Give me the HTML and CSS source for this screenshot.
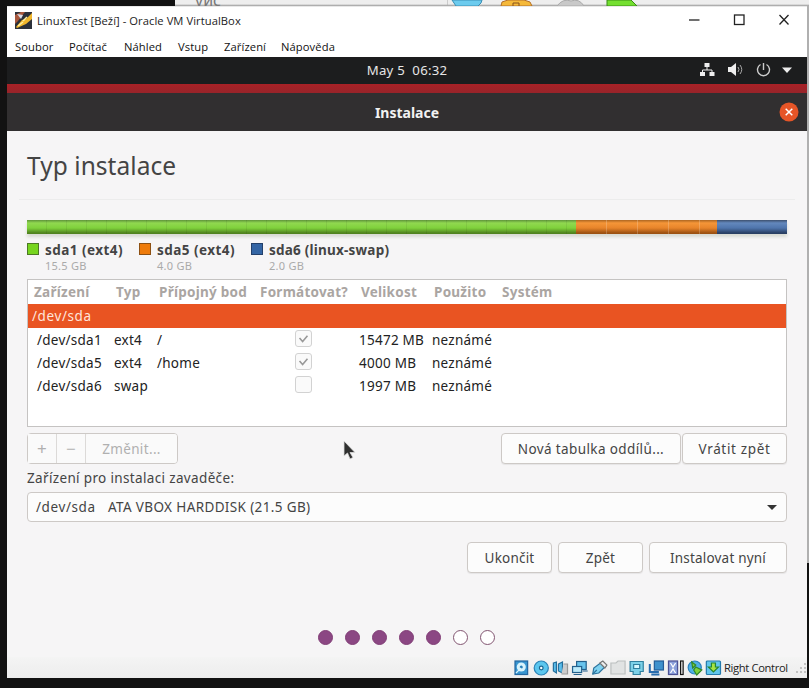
FILE: index.html
```html
<!DOCTYPE html>
<html lang="cs">
<head>
<meta charset="utf-8">
<title>LinuxTest [Beží] - Oracle VM VirtualBox</title>
<link rel="stylesheet" href="styles.css">
</head>
<body>
<div class="desktop">
  <div class="strip">
    <span class="strip-text">vис</span>
    <svg class="strip-icons" width="200" height="6" viewBox="0 0 200 6">
      <path d="M0 0v6" stroke="#aaa"/>
      <path d="M5 0h30l-1 3-3 3H9L7 3z" fill="#6ccbee" stroke="#3a8fb5"/>
      <path d="M54 6l1-4 6-2h16l6 2 2 4z" fill="#f5b93a" stroke="#b5702a"/>
      <path d="M66 6V3h6v3" fill="none" stroke="#85501c"/>
      <path d="M110 6q6-8 14-5 8-3 13 5z" fill="#c9c9c9" stroke="#aaa"/>
      <path d="M160 6V0h24l6 6z" fill="#74df30" stroke="#3b8c18"/>
    </svg>
  </div>
  <main class="window">
    <header class="titlebar">
      <svg class="app-icon" width="17" height="17" viewBox="0 0 17 17">
        <rect width="17" height="17" fill="#2b303a"/>
        <path d="M0 3l6-3h4L3 9 0 12z" fill="#a8573c"/>
        <path d="M2 2l6 1-2 4z" fill="#d7dce8"/>
        <path d="M1 15L7 8l4-1 6-6v6l-6 5-9 4z" fill="#f0b62c"/>
        <path d="M8 9l4-4M3 14l5-4" stroke="#fff0a0" stroke-width="1.5"/>
      </svg>
      <span class="win-title">LinuxTest [Beží] - Oracle VM VirtualBox</span>
      <svg class="win-controls" width="100" height="14" viewBox="0 0 100 14" fill="none" stroke="#222" stroke-width="1.3">
        <path d="M1 7h10.500"/><rect x="46.500" y="2" width="9.500" height="9.500"/><path d="M92 2l9 9.500M101 2l-9 9.500" transform="translate(-.5)"/>
      </svg>
    </header>
    <nav class="menubar">
      <span class="m1">Soubor</span><span class="m2">Počítač</span><span class="m3">Náhled</span><span class="m4">Vstup</span><span class="m5">Zařízení</span><span class="m6">Nápověda</span>
    </nav>
    <div class="panel">
      <span class="clock">May 5&nbsp; 06:32</span>
      <svg class="tray" width="94" height="16" viewBox="0 0 94 16" fill="none" stroke="#eee">
        <path d="M5.500 1h5v4h-5zM1 10h5v4H1zM10.500 10h5v4h-5z" fill="#eee" stroke="none"/>
        <path d="M8 5v3M3.500 10V8h9.500v2"/>
        <path d="M29 5h3l5-4v13l-5-4h-3z" fill="#eee" stroke="none"/>
        <path d="M39 5q2 2.500 0 5M41 3q3.500 4.500 0 9" stroke="#aaa"/>
        <path d="M61.500 2.500a6 6 0 1 0 6 0M64.500 1v7" stroke="#ccc" stroke-width="1.400"/>
        <path d="M83 5.500h10L88 11z" fill="#eee" stroke="none"/>
      </svg>
    </div>
    <div class="wallpaper"></div>
    <div class="dialog-head">
      <span class="dialog-title">Instalace</span>
      <svg class="close" width="20" height="20" viewBox="0 0 20 20"><circle cx="10" cy="10" r="9.500" fill="#e65527"/><path d="M6.700 6.700l6.600 6.600M13.300 6.700l-6.600 6.600" stroke="#fff" stroke-width="1.500"/></svg>
    </div>
    <section class="content">
      <h1><span>Typ instalace</span></h1>
      <div class="disk-bar"><i class="green"></i><i class="orange"></i><i class="blue"></i></div>
      <div class="legend">
        <div class="part"><i class="swatch s-green"></i><div><b>sda1 (ext4)</b><small>15.5 GB</small></div></div>
        <div class="part"><i class="swatch s-orange"></i><div><b>sda5 (ext4)</b><small>4.0 GB</small></div></div>
        <div class="part"><i class="swatch s-blue"></i><div><b class="swap">sda6 (linux-swap)</b><small>2.0 GB</small></div></div>
      </div>
      <div class="table">
        <div class="row head"><span>Zařízení</span><span>Typ</span><span class="mount">Přípojný bod</span><span class="format">Formátovat?</span><span>Velikost</span><span>Použito</span><span>Systém</span></div>
        <div class="row selected"><span>/dev/sda</span></div>
        <div class="row"><span>/dev/sda1</span><span>ext4</span><span>/</span><span><svg class="check" viewBox="0 0 17 17"><path d="M4 8l3.500 4L13 5.500"/></svg></span><span class="size">15472 MB</span><span>neznámé</span></div>
        <div class="row"><span>/dev/sda5</span><span>ext4</span><span>/home</span><span><svg class="check" viewBox="0 0 17 17"><path d="M4 8l3.500 4L13 5.500"/></svg></span><span class="size">4000 MB</span><span>neznámé</span></div>
        <div class="row"><span>/dev/sda6</span><span>swap</span><span></span><span><svg class="check" viewBox="0 0 17 17"></svg></span><span class="size">1997 MB</span><span>neznámé</span></div>
      </div>
      <div class="tools">
        <div class="group"><button class="icon">+</button><button class="icon">−</button><button class="edit">Změnit...</button></div>
        <button class="new"><span>Nová tabulka oddílů...</span></button><button class="revert"><span>Vrátit zpět</span></button>
      </div>
      <label class="boot-label"><span>Zařízení pro instalaci zavaděče:</span></label>
      <div class="combo"><span class="dev">/dev/sda</span><span class="disk">ATA VBOX HARDDISK (21.5 GB)</span><i class="arrow"></i></div>
      <div class="actions"><button class="quit"><span>Ukončit</span></button><button class="back"><span>Zpět</span></button><button class="install"><span>Instalovat nyní</span></button></div>
      <div class="dots"><i></i><i></i><i></i><i></i><i></i><i class="open"></i><i class="open"></i></div>
    </section>
    <footer class="statusbar">
      <svg width="208" height="16" viewBox="0 0 206 16" preserveAspectRatio="none" fill="none" stroke-width="1.200">
        <rect x="1" y="1" width="12.500" height="13.500" fill="#3795d0" stroke="#2367a0"/><circle cx="7.200" cy="7" r="4.500" fill="#d8f3fc"/><circle cx="7.200" cy="7" r="1.500" fill="#277fb8"/><path d="M7 8l-5 5" stroke="#d8f3fc"/>
        <circle cx="27" cy="8" r="7" fill="#5bc6ee" stroke="#2b83b7"/><circle cx="27" cy="8" r="1.800" fill="#fff" stroke="#1c658f"/>
        <path d="M39 3l3-1v11l-3-2zM44 4l4-2v11l-4-2z" fill="#5abdeb" stroke="#246f9c"/><path d="M49 4h4v10h-6" fill="#ccc" stroke="#999"/>
        <rect x="62" y="1.500" width="9.500" height="8" fill="#69c4ed" stroke="#24618d"/><rect x="58" y="6.500" width="9" height="6" fill="#bceafa" stroke="#24618d"/><path d="M59 14.500h8M68 11h5" stroke="#24618d"/>
        <path d="M78 14l1-6 8-6 4 4-7 7z" fill="#80d2f0" stroke="#2c739d"/><path d="M85 3l3-2 4 4-2 3z" fill="#eee" stroke="#777"/><path d="M78 14l4-4" stroke="#2c739d"/>
        <path d="M96 3h5l2-2h7v13H96z" fill="#e1e3e3" stroke="#bcc0c0"/>
        <path d="M115 1.500h13v10h-3v3h-7v-3h-3z" fill="#7dd1e8" stroke="#31809f"/><path d="M118.500 4.500h6v4h-6z" fill="#d9f8ff" stroke="#31809f"/>
        <rect x="139" y="1" width="9" height="9" fill="#3e91cd" stroke="#245d98"/><path d="M134.500 4v8h9M136 14.500h8" stroke="#286cae" stroke-width="2"/>
        <rect x="153" y="1" width="9" height="13.500" fill="#8ba0da" stroke="#4d5294"/><path d="M155 3l2.500 4L160 3M155 13l2.500-4L160 13" stroke="#fff"/><rect x="165" y="1" width="2.500" height="13.500" stroke="#111"/>
        <circle cx="179" cy="7.500" r="6.500" fill="#4eb0e6" stroke="#287fbd"/><path d="M176 2l4 3-3 3zM180 7l6 3-5 5-3-5z" fill="#7dd13c" stroke="#318728"/>
        <rect x="190.500" y="1" width="14" height="13.500" rx="1" fill="#62c6ec" stroke="#247aac"/><path d="M195.500 3h4v4h3l-5 5-5-5h3z" fill="#a7e442" stroke="#258532"/>
      </svg>
      <span class="hostkey">Right Control</span>
      <svg width="10" height="14" viewBox="0 0 10 14" fill="#c2c2c2"><path d="M0 10h2v2H0zM4 10h2v2H4zM8 10h2v2H8zM4 6h2v2H4zM8 6h2v2H8zM8 2h2v2H8z"/></svg>
    </footer>
  </main>
  <svg class="cursor" width="14" height="21" viewBox="0 0 14 21"><path d="M1 1v15l3.500-3 2.500 6 3-1.500-3-5h5z" fill="#303030" stroke="#ddd" stroke-width=".8"/></svg>
</div>
</body>
</html>
```
FILE: styles.css
```css
* { box-sizing: border-box; }
body { margin: 0; font-family: "Noto Sans", sans-serif; overflow: hidden; }
.desktop {
  width: 809px; height: 688px; position: relative;
  display: grid; grid-template: 6px 672px 10px / 7px 800px 2px;
  background: linear-gradient(90deg, transparent 807px, #b0b0b0 807px) 0 0 / 100% 563px no-repeat, #121212;
}
.strip {
  grid-area: 1 / 2 / 2 / 4; margin-left: 168px; overflow: hidden;
  display: flex; background: linear-gradient(#eee 4px, #999);
}
.strip-text { width: 272px; padding-left: 20px; font-size: 16px; line-height: 1px; color: #777; }
.window {
  grid-area: 2 / 2; background: #f6f5f6; display: grid;
  grid-template-rows: 29px 22px 27px 9px 38px 526px 21px; overflow: hidden;
}
.titlebar { background: #fff; display: flex; align-items: center; padding: 0 0 2px 8px; border-top: 1px solid #e8e8e8; }
.win-title { font-family: "Open Sans", sans-serif; font-size: 11.2px; letter-spacing: 0.06px; margin-left: 5px; color: #222; white-space: nowrap; flex: 1; }
.win-controls { margin-right: 19px; overflow: visible; }
.menubar {
  background: #fff; font: 11.200px/24px "Open Sans", sans-serif; color: #111; padding-left: 8px;
  display: grid; grid-template-columns: 54px 55px 54px 46px 57px 80px; letter-spacing: 0.1px; white-space: nowrap;
}
.panel { background: #1c1d1e; color: #e6e6e6; display: grid; grid-template-columns: 1fr auto 1fr; align-items: center; padding-bottom: 1px; }
.clock { grid-column: 2; font-size: 13.200px; letter-spacing: .25px; }
.tray { justify-self: end; margin-right: 14px; }
.wallpaper { background: linear-gradient(#a82126, #97242a); }
.dialog-head { background: #312f30; display: grid; grid-template-columns: 1fr auto 1fr; align-items: center; }
.dialog-title { grid-column: 2; color: #f2f2f2; font-size: 14px; font-weight: 700; }
.close { justify-self: end; margin-right: 8px; }
.content { padding: 0 20px; display: flex; flex-direction: column; color: #444; font-size: 13.500px; white-space: nowrap; }
h1 { margin: 0 -8px; padding-left: 8px; font-size: 24.500px; font-weight: 400; line-height: 70px; height: 69px; border-bottom: 1px solid #ececec; color: #444; letter-spacing: .05px; }
.disk-bar { height: 14px; margin-top: 20px; display: flex; box-shadow: 0 3px 3px #8a9a7848; }
.disk-bar i { background: repeating-linear-gradient(90deg, transparent 0 19px, #0001 19px 20px), linear-gradient(#5f943b, #91d950 3px, #7fd13c 8px, #50831e 13px); }
.disk-bar .green { width: 549px; }
.disk-bar .orange { width: 141px; background: repeating-linear-gradient(90deg, transparent 0 30px, #fff3 30px 31px), linear-gradient(#ad6621, #f59638 3px, #e7842a 8px, #9c5111 13px); }
.disk-bar .blue { width: 70px; background: linear-gradient(#3d506e, #6388bd 3px, #4f75ac 8px, #293f63 13px); }
.legend { display: grid; grid-template-columns: 112px 112px 1fr; height: 45px; padding-top: 9px; }
.part { display: flex; gap: 6px; }
.swatch { width: 12px; height: 12px; border: 1px solid #4d7925; }
.s-green { background: #77d51f; } .s-orange { background: #ee7b0b; border-color: #8d5013; } .s-blue { background: #3465a4; border-color: #24406a; }
.part b { display: block; font-size: 13.500px; line-height: 14px; letter-spacing: .45px; }
.part .swap { letter-spacing: .22px; }
.part small { display: block; font-size: 11px; line-height: 17px; letter-spacing: .25px; color: #aaa; }
.table { height: 148px; border: 1px solid #c5c3c2; background: #fff; color: #222; }
.row { height: 23px; line-height: 25px; padding-left: 9px; display: grid; grid-template-columns: 77px 43px 138px 64px 73px 1fr; letter-spacing: .25px; }
.head { height: 24px; line-height: 24px; padding-left: 6px; font-weight: 700; color: #aaa5a2; grid-template-columns: 82px 43px 101px 101px 73px 68px 1fr; }
.selected { height: 24px; line-height: 25px; background: #e95422; color: #ffe5da; padding-left: 4px; letter-spacing: .6px; }
.check { width: 17px; height: 17px; margin-top: 2px; border: 1px solid #d2d2d2; border-radius: 3px; background: #fafafa; display: block; fill: none; stroke: #999; stroke-width: 1.800; }
button { height: 31px; border: 1px solid #cdc9c6; border-radius: 4px; background: #fcfcfc; color: #444; font: 13.500px/28px "Noto Sans", sans-serif; letter-spacing: .2px; padding: 0; box-shadow: 0 1px 1px #0001; }
.tools { display: flex; margin-top: 6px; }
.group { display: flex; margin-right: auto; border: 1px solid #cdc9c6; border-radius: 4px; height: 31px; }
.group button { height: 29px; border: 0; background: #fafafa; color: #b0b0b0; box-shadow: none; border-radius: 3px; }
.group .icon { width: 29px; font-size: 17px; border-right: 1px solid #dcdad8; border-radius: 0; }
.group .edit { width: 91px; letter-spacing: .35px; }
.new { width: 180px; margin-right: 1px; letter-spacing: .38px; } .revert { width: 105px; letter-spacing: .65px; }
.boot-label { height: 28px; line-height: 28px; letter-spacing: .35px; }
.combo { height: 30px; border: 1px solid #cdc9c6; border-radius: 4px; background: #fcfcfc; line-height: 28px; padding: 0 9px 0 8px; display: flex; align-items: center; }
.dev { width: 72px; letter-spacing: .6px; } .disk { flex: 1; letter-spacing: .37px; }
.arrow { border: 5px solid transparent; border-top-color: #333; border-bottom: 0; }
.actions { display: flex; justify-content: flex-end; gap: 6px; margin-top: 20px; }
.quit, .back { width: 85px; } .install { width: 138px; }
.dots { display: flex; gap: 12px; margin: 57px 0 0 291px; }
.dots i { width: 15px; height: 15px; border-radius: 50%; background: #8b4783; border: 1px solid #813d76; }
.dots .open { background: #fff; border-color: #825571; }
.statusbar { background: linear-gradient(#f4f4f4, #ededed); display: flex; align-items: center; justify-content: flex-end; padding-right: 1px; }
.hostkey { font: 11.200px "Open Sans", sans-serif; color: #222; margin-left: 2px; width: 72px; white-space: nowrap; letter-spacing: -.35px; }
.cursor { position: absolute; left: 343px; top: 440px; }
```
